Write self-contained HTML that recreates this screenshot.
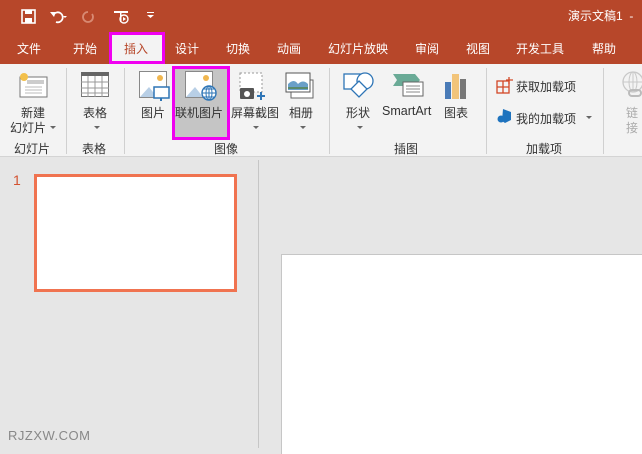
<!DOCTYPE html>
<html><head><meta charset="utf-8"><style>
*{margin:0;padding:0;box-sizing:border-box}
body{width:642px;height:448px;overflow:hidden;position:relative;background:#e6e6e6;font-family:"Liberation Sans","Noto Sans CJK SC",sans-serif;font-size:12px;color:#333}
.a{position:absolute}
.tab{position:absolute;top:40px;color:#fff;font-size:12px}
.lbl{position:absolute;font-size:12px;color:#333;white-space:nowrap}
.sep{position:absolute;top:68px;width:1px;height:86px;background:#d0d0d0}
.arr{position:absolute;width:0;height:0;border-left:3px solid transparent;border-right:3px solid transparent;border-top:3px solid #666}
</style></head><body>
<div class="a" style="left:0;top:0;width:642px;height:64px;background:#b7472a"></div>
<!-- QAT -->
<svg class="a" style="left:20px;top:8px" width="140" height="18">
<rect x="2" y="2" width="13" height="13" fill="none" stroke="#fff" stroke-width="1.6"/><rect x="5" y="2" width="7" height="4" fill="#fff"/><rect x="5" y="10" width="7" height="5" fill="#fff"/>
<path d="M34 6 a5 5 0 1 1 2 8" fill="none" stroke="#fff" stroke-width="1.8"/><path d="M30 4 l4 5 l2-5z" fill="#fff"/><path d="M43 8 l4 0 l-2 2z" fill="#fff"/>
<path d="M68 4 a5 5 0 1 0 4 2" fill="none" stroke="#d88a73" stroke-width="1.8"/>
<rect x="94" y="3" width="14" height="2" fill="#fff"/><rect x="100" y="5" width="1.5" height="9" fill="#fff"/><circle cx="104" cy="11" r="4" fill="none" stroke="#fff" stroke-width="1.4"/><path d="M103 9 l3 2 l-3 2z" fill="#fff"/>
<path d="M127 7 h7 l-3.5 3z" fill="#fff"/><rect x="127" y="4" width="7" height="1" fill="#fff"/>
</svg>
<div class="a" style="left:568px;top:7px;color:#fff;font-size:12px">演示文稿1 &nbsp;-</div>
<!-- tabs -->
<div class="tab" style="left:17px">文件</div>
<div class="tab" style="left:73px">开始</div>
<div class="a" style="left:109px;top:32px;width:56px;height:32px;background:#f3f3f3;border:3px solid #f000f0"></div>
<div class="tab" style="left:124px;color:#b7472a">插入</div>
<div class="tab" style="left:175px">设计</div>
<div class="tab" style="left:226px">切换</div>
<div class="tab" style="left:277px">动画</div>
<div class="tab" style="left:328px">幻灯片放映</div>
<div class="tab" style="left:415px">审阅</div>
<div class="tab" style="left:466px">视图</div>
<div class="tab" style="left:516px">开发工具</div>
<div class="tab" style="left:592px">帮助</div>
<!-- ribbon -->
<div class="a" style="left:0;top:64px;width:642px;height:93px;background:#f3f3f3;border-bottom:1px solid #d4d4d4"></div>
<div class="sep" style="left:66px"></div><div class="sep" style="left:124px"></div><div class="sep" style="left:329px"></div><div class="sep" style="left:486px"></div><div class="sep" style="left:603px"></div>
<!-- new slide -->
<svg class="a" style="left:17px;top:70px" width="32" height="30"><rect x="3" y="7" width="27" height="20" fill="#fff" stroke="#777"/><rect x="10" y="10" width="17" height="4" fill="#ccc"/><path d="M8 17h17M8 20h17M8 23h17" stroke="#bbb"/><circle cx="7" cy="7" r="4" fill="#f3c04a"/></svg>
<div class="lbl" style="left:21px;top:104px">新建</div>
<div class="lbl" style="left:10px;top:119px">幻灯片</div><div class="arr" style="left:50px;top:126px"></div>
<div class="lbl" style="left:14px;top:140px">幻灯片</div>
<!-- table -->
<svg class="a" style="left:81px;top:72px" width="29" height="26"><rect x="0.5" y="0.5" width="27" height="24" fill="#fff" stroke="#777"/><rect x="0" y="0" width="28" height="4" fill="#666"/><path d="M7 4v21M14 4v21M21 4v21M0 10h28M0 16h28M0 21h28" stroke="#999"/></svg>
<div class="lbl" style="left:83px;top:104px">表格</div><div class="arr" style="left:94px;top:126px"></div>
<div class="lbl" style="left:82px;top:140px">表格</div>
<!-- pictures -->
<svg class="a" style="left:139px;top:71px" width="32" height="32"><rect x="0.5" y="0.5" width="27" height="26" fill="#fff" stroke="#888"/><path d="M1 26 l9-10 l8 10z" fill="#b8cfe6"/><circle cx="21" cy="7" r="3" fill="#f0b64f"/><rect x="15" y="16" width="15" height="11" fill="#fff" stroke="#2e75b6" stroke-width="1.5"/><rect x="21" y="27" width="2" height="3" fill="#2e75b6"/></svg>
<div class="lbl" style="left:141px;top:104px">图片</div>
<div class="a" style="left:172px;top:66px;width:58px;height:74px;background:#c5c5c5;border:3px solid #f000f0"></div>
<svg class="a" style="left:185px;top:71px" width="34" height="32"><rect x="0.5" y="0.5" width="27" height="26" fill="#fff" stroke="#888"/><path d="M1 26 l9-10 l8 10z" fill="#b8cfe6"/><circle cx="21" cy="7" r="3" fill="#f0b64f"/><circle cx="24" cy="22" r="7" fill="#fff" stroke="#2e75b6" stroke-width="1.4"/><path d="M17 22h14M24 15v14M19 18h10M19 26h10" stroke="#2e75b6"/><ellipse cx="24" cy="22" rx="3" ry="7" fill="none" stroke="#2e75b6"/></svg>
<div class="lbl" style="left:175px;top:104px">联机图片</div>
<svg class="a" style="left:238px;top:72px" width="30" height="30"><rect x="2" y="1" width="22" height="19" fill="#fff" stroke="#999" stroke-dasharray="2 2"/><rect x="2" y="16" width="14" height="11" rx="1" fill="#555"/><circle cx="9" cy="22" r="3" fill="#fff"/><path d="M23 20v8M19 24h8" stroke="#2e75b6" stroke-width="2"/></svg>
<div class="lbl" style="left:231px;top:104px">屏幕截图</div><div class="arr" style="left:253px;top:126px"></div>
<svg class="a" style="left:285px;top:72px" width="30" height="28"><rect x="6" y="8" width="22" height="18" fill="#fff" stroke="#666"/><rect x="1" y="1" width="24" height="19" fill="#fff" stroke="#555"/><path d="M3 12 q6-6 10 0 q5-5 10 0 v6 h-20z" fill="#6aa0c8"/><path d="M3 16h20" stroke="#5a8a6a" stroke-width="2"/></svg>
<div class="lbl" style="left:289px;top:104px">相册</div><div class="arr" style="left:300px;top:126px"></div>
<div class="lbl" style="left:214px;top:140px">图像</div>
<!-- shapes -->
<svg class="a" style="left:343px;top:71px" width="32" height="30"><rect x="1" y="3" width="16" height="15" fill="#fff" stroke="#2e75b6" stroke-width="1.3"/><circle cx="22" cy="10" r="8" fill="#fff" stroke="#2e75b6" stroke-width="1.3"/><path d="M16 10 l8 8 l-8 8 l-8-8z" fill="#fff" stroke="#2e75b6" stroke-width="1.3"/></svg>
<div class="lbl" style="left:346px;top:104px">形状</div><div class="arr" style="left:357px;top:126px"></div>
<svg class="a" style="left:393px;top:74px" width="32" height="24"><path d="M0 0h22l5 6l-5 6h-22l4-6z" fill="#6aaa96"/><rect x="10" y="8" width="20" height="14" fill="#fff" stroke="#666"/><path d="M13 12h14M13 15h14M13 18h14" stroke="#888"/></svg>
<div class="lbl" style="left:382px;top:104px;font-size:12.5px">SmartArt</div>
<svg class="a" style="left:444px;top:72px" width="26" height="28"><rect x="1" y="10" width="6" height="17" fill="#4a7bb7"/><rect x="8" y="2" width="7" height="25" fill="#f2c47a"/><rect x="16" y="7" width="6" height="20" fill="#777"/></svg>
<div class="lbl" style="left:444px;top:104px">图表</div>
<div class="lbl" style="left:394px;top:140px">插图</div>
<!-- add-ins -->
<svg class="a" style="left:496px;top:76px" width="18" height="18"><rect x="1" y="5" width="12" height="12" fill="none" stroke="#d24726" stroke-width="1.3"/><path d="M7 5v12M1 11h12M13 1v7M10 4h7" stroke="#d24726" stroke-width="1.3"/></svg>
<div class="lbl" style="left:516px;top:78px">获取加载项</div>
<svg class="a" style="left:497px;top:108px" width="16" height="16"><path d="M6 1l8 3v8l-6 3l-3-2z" fill="#1e73be"/><circle cx="4" cy="11" r="3.5" fill="#1e73be"/></svg>
<div class="lbl" style="left:516px;top:110px">我的加载项</div><div class="arr" style="left:586px;top:116px"></div>
<div class="lbl" style="left:526px;top:140px">加载项</div>
<!-- link -->
<svg class="a" style="left:617px;top:70px" width="25" height="28"><circle cx="16" cy="12" r="10" fill="none" stroke="#c8c8c8" stroke-width="1.3"/><path d="M6 12h20M16 2v20" stroke="#c8c8c8"/><ellipse cx="16" cy="12" rx="4" ry="10" fill="none" stroke="#c8c8c8"/><rect x="12" y="20" width="12" height="6" rx="3" fill="none" stroke="#bbb" stroke-width="2"/></svg>
<div class="lbl" style="left:626px;top:104px;color:#aaa">链</div>
<div class="lbl" style="left:626px;top:119px;color:#aaa">接</div>
<!-- panes -->
<div class="a" style="left:258px;top:160px;width:1px;height:288px;background:#c6c6c6"></div>
<div class="a" style="left:13px;top:172px;color:#d35230;font-size:14px">1</div>
<div class="a" style="left:34px;top:174px;width:203px;height:118px;background:#fff;border:3px solid #f07350"></div>
<div class="a" style="left:281px;top:254px;width:370px;height:200px;background:#fff;border-top:1px solid #c6c6c6;border-left:1px solid #c6c6c6"></div>
<div class="a" style="left:8px;top:428px;color:#888;font-size:13px;letter-spacing:0.5px">RJZXW.COM</div>
</body></html>
